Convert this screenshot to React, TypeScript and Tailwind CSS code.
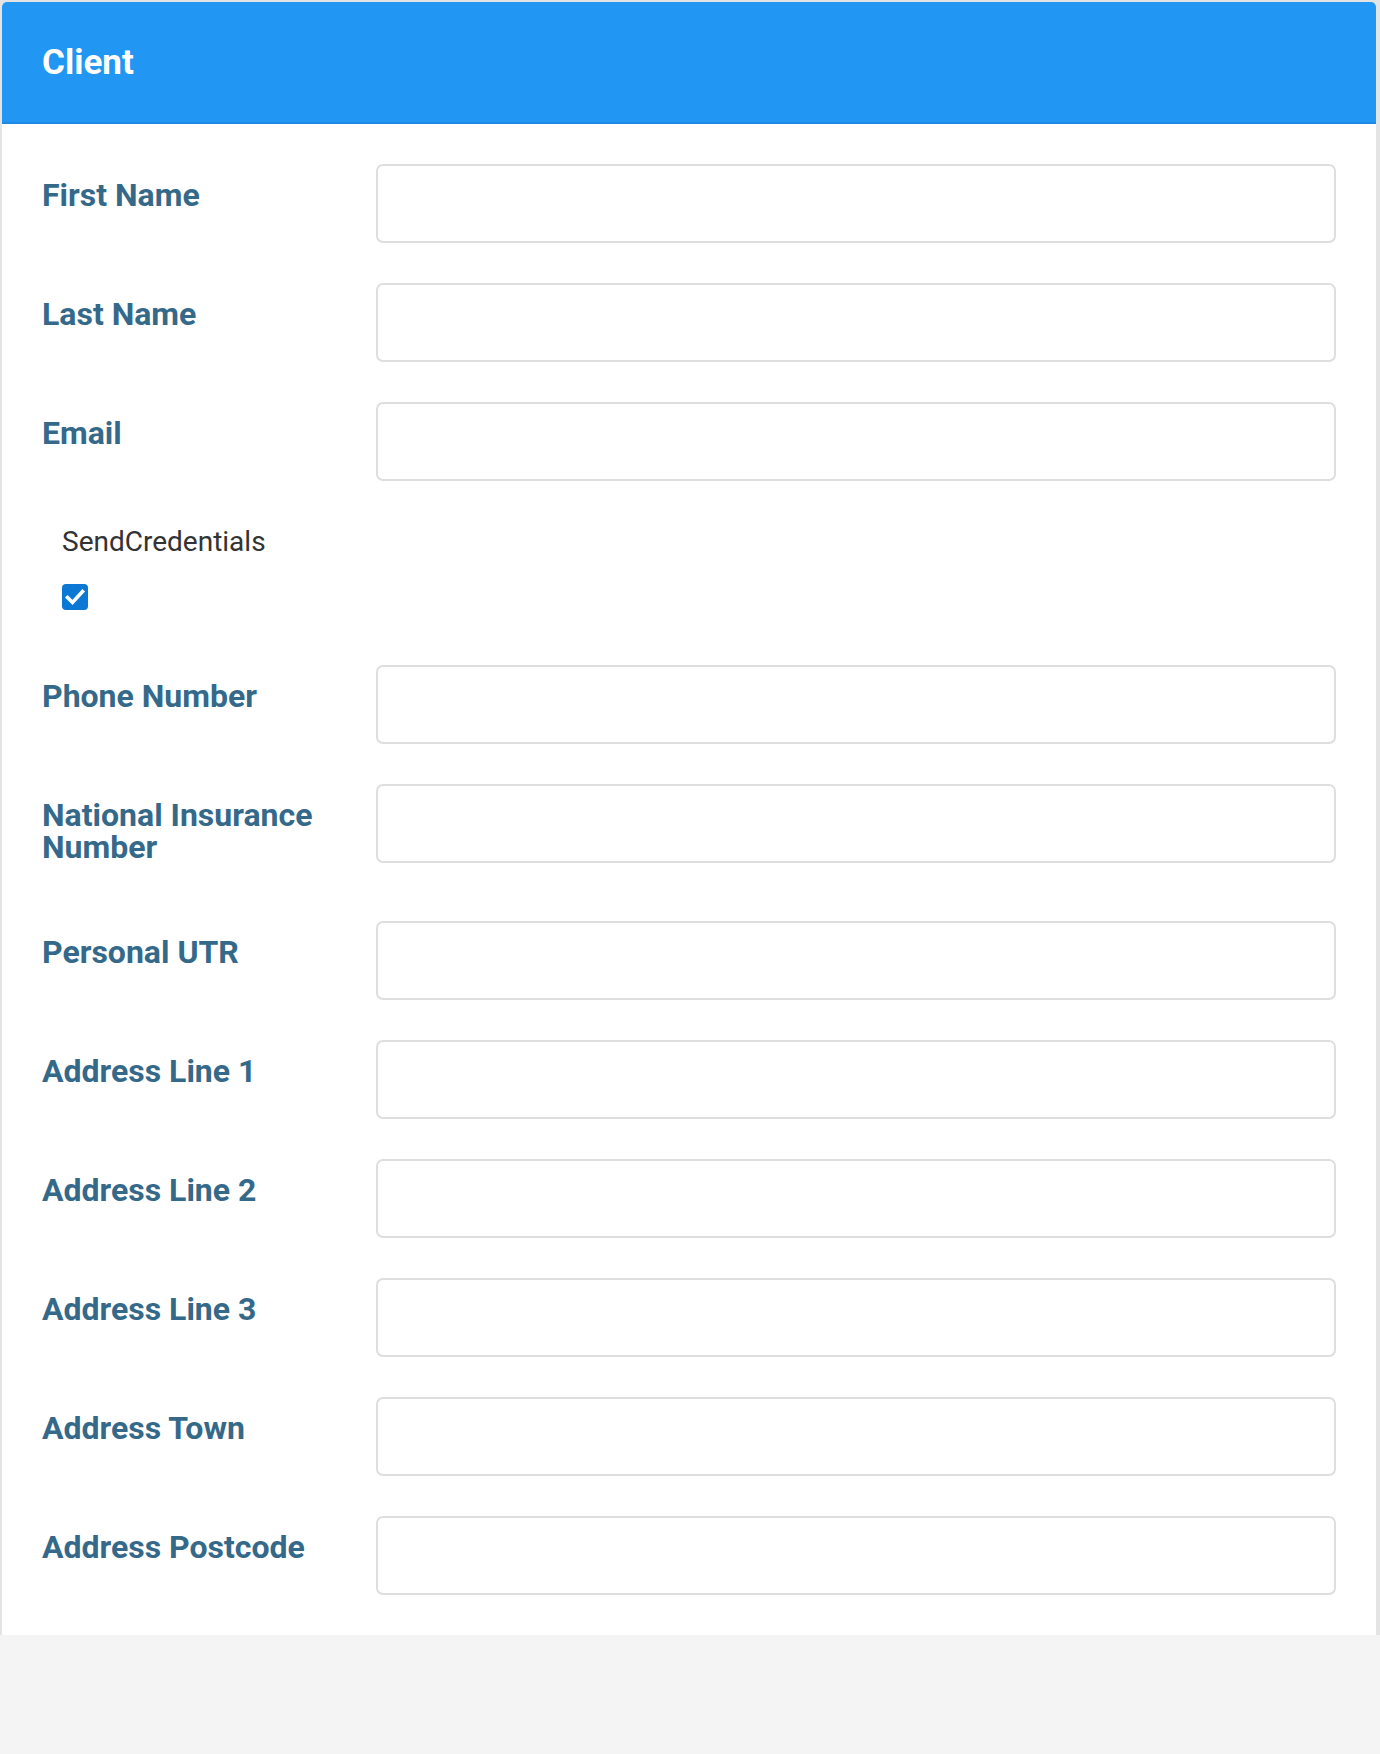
import React from "react";

const fields = [
  "First Name",
  "Last Name",
  "Email",
];

const moreFields = [
  "Phone Number",
  "National Insurance Number",
  "Personal UTR",
  "Address Line 1",
  "Address Line 2",
  "Address Line 3",
  "Address Town",
  "Address Postcode",
];

function FieldRow({ label }: { label: string }) {
  return (
    <div className="grid grid-cols-[334px_1fr] mb-[40px]">
      <label className="pt-[15px] pb-[18px] pr-4 text-[32px] leading-[32px] font-bold text-[#35698a]">
        {label}
      </label>
      <input
        type="text"
        className="h-[79px] w-full border-2 border-[#dedede] rounded-[7px] bg-white px-4 outline-none"
      />
    </div>
  );
}

function CheckedBox() {
  return (
    <div className="w-[26px] h-[26px] rounded-[4px] bg-[#0a78d4] flex items-center justify-center">
      <svg width="26" height="26" viewBox="0 0 26 26" fill="none">
        <path d="M5.5 13.5 L10.5 18.5 L20.5 7.5" stroke="white" strokeWidth={3.6} strokeLinecap="square" />
      </svg>
    </div>
  );
}

export default function App() {
  return (
    <div className="min-h-[1754px] bg-[#f4f4f4] font-['Roboto',sans-serif]">
      <div className="bg-[#e4e4e4] pt-[2px] pl-[2px] pr-[4px]">
        <div className="bg-white rounded-t-[5px] overflow-hidden">
          <div className="h-[122px] bg-[#2196f3] border-b-2 border-[#1e88e5] flex items-center px-[40px] pt-[2px]">
            <h1 className="text-white text-[35px] font-bold">Client</h1>
          </div>
          <div className="px-[40px] pt-[40px]">
            {fields.map((f) => (
              <FieldRow key={f} label={f} />
            ))}
            <div className="pl-[20px] pb-[55px] mt-[3px]">
              <div className="text-[28px] leading-[42px] text-[#333333]">SendCredentials</div>
              <div className="mt-[21px]">
                <CheckedBox />
              </div>
            </div>
            {moreFields.map((f) => (
              <FieldRow key={f} label={f} />
            ))}
          </div>
        </div>
      </div>
    </div>
  );
}
